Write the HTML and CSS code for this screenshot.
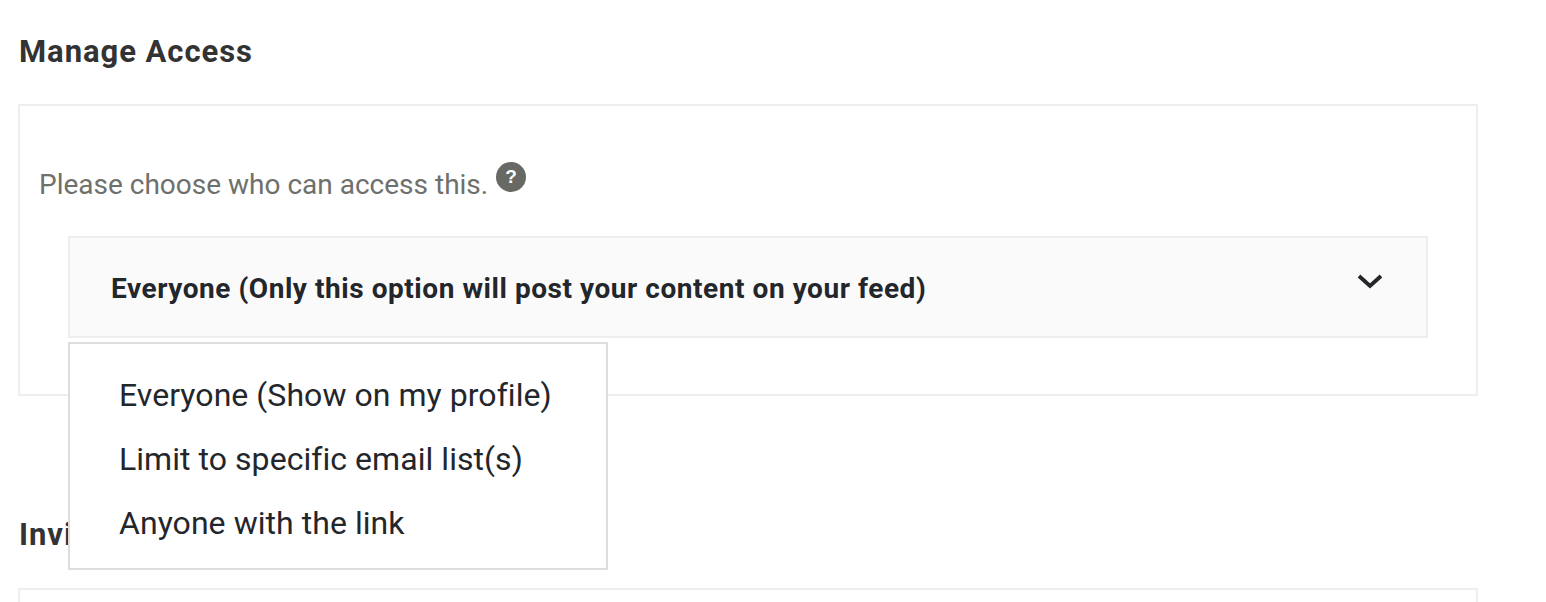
FILE: index.html
```html
<!DOCTYPE html>
<html lang="en">
<head>
<meta charset="utf-8">
<title>Manage Access</title>
<link rel="stylesheet" href="styles.css">
</head>
<body>
<main class="page">
  <h2 class="heading">Manage Access</h2>
  <section class="box access">
    <p class="prompt"><span class="prompt-text">Please choose who can access this.</span>
      <svg class="help" viewBox="0 0 30 30" aria-hidden="true"><circle cx="15" cy="15" r="15" fill="#666964"/><text x="15" y="21" text-anchor="middle" class="help-mark">?</text></svg>
    </p>
    <div class="select-wrap">
      <div class="select">
        <span class="select-label">Everyone (Only this option will post your content on your feed)</span>
        <svg class="chev" viewBox="0 0 26 16" aria-hidden="true"><path d="M2 3l11 10L24 3" fill="none" stroke="#23262b" stroke-width="3.8"/></svg>
      </div>
      <ul class="menu">
        <li>Everyone (Show on my profile)</li>
        <li>Limit to specific email list(s)</li>
        <li>Anyone with the link</li>
      </ul>
    </div>
  </section>
  <h2 class="heading invite">Invite</h2>
  <section class="box second"></section>
</main>
</body>
</html>
```
FILE: styles.css
```css
html, body { margin: 0; padding: 0; background: #fff; overflow: hidden; }
body { font-family: "Roboto", "Liberation Sans", sans-serif; height: 602px; }
.page { padding: 33px 68px 0 18px; }
.heading { margin: 0 0 0 1px; font-size: 31px; line-height: 38px; font-weight: 700; letter-spacing: 0.95px; color: #333; }
.box { border: 2px solid #eee; background: #fff; }
.access { margin-top: 33px; height: 288px; padding: 0 48px 0 19px; }
.prompt { margin: 58px 0 0; height: 72px; font-size: 28px; line-height: 36px; color: #6e706c; display: flex; align-items: flex-start; gap: 8px; }
.prompt-text { margin-top: 3px; }
.help { width: 30px; height: 30px; margin-top: -2px; }
.help-mark { font: 700 19px "Liberation Sans", sans-serif; fill: #fff; }
.select-wrap { position: relative; margin-left: 29px; }
.select { height: 98px; border: 2px solid #eee; background: #fafafa; display: flex; align-items: center; justify-content: space-between; padding: 0 43px 0 41px; }
.select-label { font-size: 28px; font-weight: 700; letter-spacing: 0.55px; color: #23262b; padding-top: 2px; }
.chev { width: 26px; height: 16px; margin-bottom: 12px; }
.menu { position: absolute; top: 106px; left: 0; width: 540px; height: 228px; margin: 0; padding: 19px 0 0 49px; box-sizing: border-box; list-style: none; background: #fff; border: 2px solid #ddd; z-index: 2; font-size: 32px; letter-spacing: 0.05px; color: #23262b; }
.menu li { height: 64px; line-height: 64px; }
.invite { margin-top: 120px; }
.second { margin-top: 34px; height: 40px; }
```
